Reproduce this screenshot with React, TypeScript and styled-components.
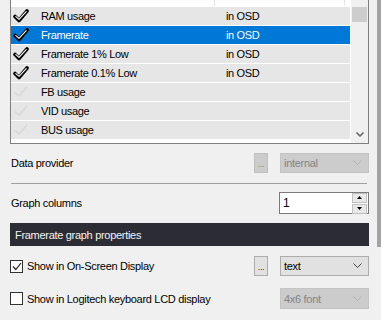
import * as React from 'react';
import styled, { createGlobalStyle } from 'styled-components';

const Global = createGlobalStyle`
  html, body { margin: 0; padding: 0; background: #f0f0f0; }
  body { font-family: "Liberation Sans", Arial, sans-serif; font-size: 11px; color: #000; }
`;

const Page = styled.div`
  width: 381px;
  height: 320px;
  display: flex;
  overflow: hidden;
  background: #f0f0f0;
`;

const Main = styled.div`
  width: 359px;
  padding-left: 10px;
  display: flex;
  flex-direction: column;
`;

const Gutter = styled.div`
  flex: 1;
  display: flex;
  justify-content: flex-end;
`;

const OuterThumb = styled.div`
  width: 4px;
  height: 247px;
  background: #a3a3a3;
`;

const ListBox = styled.div`
  border: 1px solid #7f7f7f;
  border-top: none;
  background: #fff;
  display: flex;
  box-sizing: border-box;
  height: 144px;
`;

const ListBody = styled.div`
  flex: 1;
  display: flex;
  flex-direction: column;
  gap: 1px;
  padding-right: 1px;
`;

// header row is scrolled mostly out of view; only its bottom edge shows
const Header = styled.div`
  height: 6px;
  display: flex;
  background: #fff;
`;

const HeadCell = styled.div<{ $w: number }>`
  width: ${p => p.$w}px;
  box-sizing: border-box;
  border-right: 1px solid #e5e5e5;
`;

const Row = styled.div<{ $sel?: boolean }>`
  height: 18px;
  display: flex;
  align-items: center;
  background: ${p => (p.$sel ? '#0078d7' : '#e6e6e6')};
  color: ${p => (p.$sel ? '#fff' : '#000')};
  letter-spacing: -0.35px;
`;

const IconCell = styled.div`
  width: 28px;
  padding-left: 2px;
  display: flex;
  align-items: center;
`;

const NameCell = styled.div`
  width: 185px;
`;

const ValueCell = styled.div`
  flex: 1;
`;

const VScroll = styled.div`
  width: 17px;
  background: #f0f0f0;
  display: flex;
  flex-direction: column;
  align-items: center;
  padding-top: 7px;
  box-sizing: border-box;
`;

const VThumb = styled.div`
  width: 15px;
  height: 15px;
  background: #cdcdcd;
`;

const VArrow = styled.div`
  margin-top: auto;
  margin-bottom: 6px;
  display: flex;
`;

const FieldRow = styled.div<{ $h: number; $mt: number }>`
  height: ${p => p.$h}px;
  margin-top: ${p => p.$mt}px;
  display: flex;
  align-items: center;
  letter-spacing: -0.3px;
`;

const Label = styled.div`
  flex: 1;
  padding-left: 1px;
`;

const DotsButton = styled.div<{ $disabled?: boolean }>`
  width: 12px;
  height: 14px;
  margin-right: 12px;
  border: 1px solid ${p => (p.$disabled ? '#bfbfbf' : '#adadad')};
  background: ${p => (p.$disabled ? '#cccccc' : '#e1e1e1')};
  color: ${p => (p.$disabled ? '#8a8a8a' : '#333')};
  font-size: 9px;
  display: flex;
  align-items: center;
  justify-content: center;
  padding-top: 3px;
  padding-bottom: 1px;
`;

const Combo = styled.div<{ $disabled?: boolean; $h: number }>`
  width: 89px;
  height: ${p => p.$h}px;
  box-sizing: border-box;
  border: 1px solid ${p => (p.$disabled ? '#c4c4c4' : '#adadad')};
  background: ${p => (p.$disabled ? '#cccccc' : '#e1e1e1')};
  color: ${p => (p.$disabled ? '#838383' : '#000')};
  display: flex;
  align-items: center;
  padding: 0 6px 0 3px;
  justify-content: space-between;
`;

const Separator = styled.div`
  height: 1px;
  background: #a0a0a0;
  margin: 10px 2px 0 1px;
`;

const Spinner = styled.div`
  width: 90px;
  height: 22px;
  box-sizing: border-box;
  border: 1px solid #7a7a7a;
  background: #fff;
  display: flex;
  align-items: center;
  padding-left: 3px;
  font-size: 12px;
`;

const SpinValue = styled.div`
  flex: 1;
`;

const SpinButtons = styled.div`
  width: 15px;
  display: flex;
  flex-direction: column;
  gap: 1px;
  margin-right: 1px;
`;

const SpinBtn = styled.div`
  height: 8px;
  border: 1px solid #c0c0c0;
  background: #e8e8e8;
  display: flex;
  align-items: center;
  justify-content: center;
`;

const SectionBar = styled.div`
  height: 23px;
  margin-top: 9px;
  background: #2c2c34;
  color: #f4f4f4;
  display: flex;
  align-items: center;
  padding-left: 5px;
  letter-spacing: -0.3px;
`;

const CheckLabel = styled.div`
  flex: 1;
  display: flex;
  align-items: center;
  gap: 4px;
`;

const Box = styled.div`
  width: 11px;
  height: 11px;
  border: 1px solid #333;
  background: #fff;
  display: flex;
  align-items: center;
  justify-content: center;
`;

const Tick = ({ faded }: { faded?: boolean }) =>
  faded ? (
    <svg width="16" height="14" viewBox="0 0 16 14">
      <path d="M2.5 8 L6 11 L13.5 2.5" fill="none" stroke="#d6d6d6" strokeWidth="1.4" strokeLinejoin="round" strokeLinecap="round" />
    </svg>
  ) : (
    <svg width="16" height="14" viewBox="0 0 16 14">
      <path d="M2 7.5 L6 11.5 L14 2" fill="none" stroke="#000" strokeWidth="3.6" strokeLinejoin="round" strokeLinecap="round" />
      <path d="M2.8 7.6 L6 10.4 L13.2 2.6" fill="none" stroke="#fff" strokeWidth="1.1" strokeLinejoin="round" strokeLinecap="round" />
    </svg>
  );

const Chevron = ({ color }: { color: string }) => (
  <svg width="9" height="6" viewBox="0 0 9 6">
    <path d="M0.5 0.5 L4.5 4.5 L8.5 0.5" fill="none" stroke={color} strokeWidth="1" />
  </svg>
);

const items = [
  { name: 'RAM usage', value: 'in OSD', on: true },
  { name: 'Framerate', value: 'in OSD', on: true, sel: true },
  { name: 'Framerate 1% Low', value: 'in OSD', on: true },
  { name: 'Framerate 0.1% Low', value: 'in OSD', on: true },
  { name: 'FB usage', value: '', on: false },
  { name: 'VID usage', value: '', on: false },
  { name: 'BUS usage', value: '', on: false },
];

export default function App() {
  return (
    <Page>
      <Global />
      <Main>
        <ListBox>
          <ListBody>
            <Header>
              <HeadCell $w={204} />
              <HeadCell $w={130} />
            </Header>
            {items.map(it => (
              <Row key={it.name} $sel={it.sel}>
                <IconCell>
                  <Tick faded={!it.on} />
                </IconCell>
                <NameCell>{it.name}</NameCell>
                <ValueCell>{it.value}</ValueCell>
              </Row>
            ))}
          </ListBody>
          <VScroll>
            <VThumb />
            <VArrow>
              <svg width="8" height="5" viewBox="0 0 8 5">
                <path d="M0.5 0.5 L4 4 L7.5 0.5" fill="none" stroke="#606060" strokeWidth="1.5" />
              </svg>
            </VArrow>
          </VScroll>
        </ListBox>

        <FieldRow $h={20} $mt={9}>
          <Label>Data provider</Label>
          <DotsButton $disabled>...</DotsButton>
          <Combo $disabled $h={20}>
            <span>internal</span>
            <Chevron color="#b0b0b0" />
          </Combo>
        </FieldRow>

        <Separator />

        <FieldRow $h={22} $mt={8}>
          <Label>Graph columns</Label>
          <Spinner>
            <SpinValue>1</SpinValue>
            <SpinButtons>
              <SpinBtn>
                <svg width="5" height="3" viewBox="0 0 5 3"><path d="M0 3 L2.5 0 L5 3 Z" fill="#000" /></svg>
              </SpinBtn>
              <SpinBtn>
                <svg width="5" height="3" viewBox="0 0 5 3"><path d="M0 0 L2.5 3 L5 0 Z" fill="#000" /></svg>
              </SpinBtn>
            </SpinButtons>
          </Spinner>
        </FieldRow>

        <SectionBar>Framerate graph properties</SectionBar>

        <FieldRow $h={20} $mt={10}>
          <CheckLabel>
            <Box>
              <svg width="10" height="9" viewBox="0 0 10 9">
                <path d="M1 4.5 L3.8 7.5 L9 1" fill="none" stroke="#222" strokeWidth="1.2" />
              </svg>
            </Box>
            Show in On-Screen Display
          </CheckLabel>
          <DotsButton>...</DotsButton>
          <Combo $h={20}>
            <span>text</span>
            <Chevron color="#444" />
          </Combo>
        </FieldRow>

        <FieldRow $h={21} $mt={12}>
          <CheckLabel>
            <Box />
            Show in Logitech keyboard LCD display
          </CheckLabel>
          <Combo $disabled $h={21}>
            <span>4x6 font</span>
            <Chevron color="#b0b0b0" />
          </Combo>
        </FieldRow>
      </Main>
      <Gutter>
        <OuterThumb />
      </Gutter>
    </Page>
  );
}
